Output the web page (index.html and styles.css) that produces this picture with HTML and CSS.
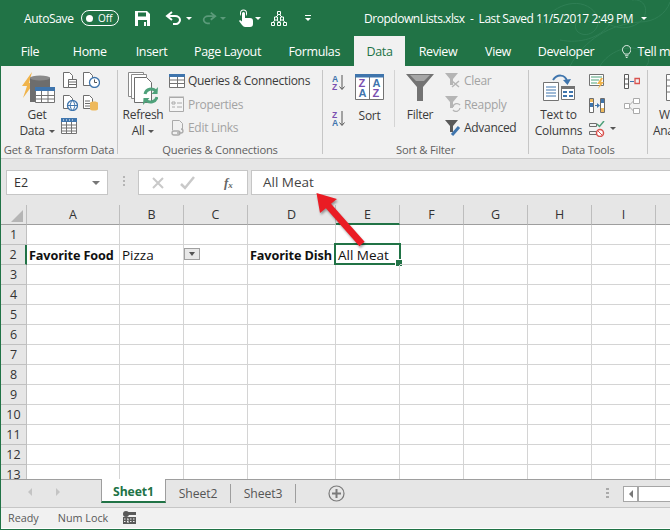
FILE: index.html
```html
<!DOCTYPE html>
<html lang="en">
<head>
<meta charset="utf-8">
<title>DropdownLists.xlsx</title>
<link rel="stylesheet" href="styles.css">
</head>
<body>
<div class="window">
  <div class="head">
    <svg class="filigree" width="130" height="66" viewBox="0 0 130 66" fill="none" stroke="#2f7f55" stroke-width="1">
      <path d="M2 24C14 2 44-4 56 14c8 14-8 26-18 18-8-8 4-18 12-10"/>
      <path d="M30 66C44 40 70 24 100 22c14 0 26-8 30-20"/>
      <path d="M56 14c14 16 34 18 46 6 8-10 2-22-10-20"/>
      <path d="M60 66c8-14 30-24 44-14 10 8 2 20-8 14"/>
      <path d="M20 40c20 4 40-2 50-16"/>
    </svg>
    <header class="titlebar">
      <span class="autosave">AutoSave</span>
      <span class="toggle"><i class="knob"></i><span>Off</span></span>
      <svg class="qa save" width="15" height="15" viewBox="0 0 15 15"><path fill="#fff" d="M0 0h12l3 3v12H0z"/><path fill="#217346" d="M3 1.500h8v4H3zM3 9h9v6H3z"/><path fill="#fff" d="M9 11h2v4H9z"/></svg>
      <svg class="qa undo" width="18" height="14" viewBox="0 0 18 14" fill="none" stroke="#fff" stroke-width="2"><path d="M7 1 2 5l5 4"/><path d="M2 5h8c3 0 5 2 5 4s-2 4-4 4H8"/></svg>
      <span class="caret c-undo"></span>
      <svg class="qa redo" width="16" height="14" viewBox="0 0 18 14" fill="none" stroke="#5b9a7a" stroke-width="2"><path d="m11 1 5 4-5 4"/><path d="M16 5H8C5 5 3 7 3 9s2 4 4 4h3"/></svg>
      <span class="caret dim c-redo"></span>
      <svg class="qa touch" width="17" height="18" viewBox="0 0 17 18"><path fill="#fff" d="M3 5V4a3.500 3.500 0 0 1 7 0v1a3.500 3.500 0 0 1-1 2V4a2.500 2.500 0 0 0-5 0v3a3.500 3.500 0 0 1-1-2z"/><path fill="#fff" d="M5 4.500a1.500 1.500 0 0 1 3 0V9h5c2 0 3 1 3 3v3c0 2-1 3-3 3H8c-1 0-2-1-3-2L2 12l1-1 2 1.500z"/></svg>
      <span class="caret c-touch"></span>
      <svg class="qa tree" width="16" height="15" viewBox="0 0 16 15" fill="none" stroke="#fff"><path d="M6.500.500h3v3h-3zM3.500 6h3v3h-3zM9.500 6h3v3h-3zM.500 11.500h3v3h-3zM6.500 11.500h3v3h-3zM12.500 11.500h3v3h-3z"/><path d="M7 4 5 6M9 4l2 2M4 9l-2 2.500M6 9l2 2.500M10 9l-2 2.500M12 9l2 2.500"/></svg>
      <span class="customize"></span>
      <span class="doc-title">DropdownLists.xlsx &nbsp;-&nbsp; Last Saved 11/5/2017 2:49 PM</span>
      <span class="caret c-title"></span>
    </header>
    <nav class="tabs">
      <span>File</span><span>Home</span><span>Insert</span><span>Page Layout</span><span>Formulas</span><span class="active">Data</span><span>Review</span><span>View</span><span>Developer</span>
      <span class="tell">
        <svg width="11" height="15" viewBox="0 0 11 15" fill="none" stroke="#fff"><path d="M3 10.500C2 8.500.500 7.500.500 5.500a5 5 0 0 1 10 0c0 2-1.500 3-2.500 5zM3.500 12.500h4M4.500 14.500h2"/></svg>
        Tell me
      </span>
    </nav>
  </div>

  <section class="ribbon">
    <div class="group g1">
      <div class="body">
        <div class="big getdata">
          <svg width="34" height="34" viewBox="0 0 34 34">
            <path fill="#f0b44c" d="M11 0 1 14h5L2 26l11-15H8z"/>
            <path fill="#6d6d6d" d="M9 6c0-2 20-2 20 0v24H9z"/>
            <ellipse cx="19" cy="6" rx="10" ry="2.500" fill="#8a8a8a"/>
            <path fill="#fff" stroke="#737373" d="M14.500 16.500h19v14h-19z"/>
            <path fill="#3f75ad" d="M14 15h20v4H14z"/>
            <path fill="none" stroke="#737373" d="M14.500 23.500h19M14.500 27h19M20.500 19v11M27 19v11"/>
          </svg>
          <span class="l1">Get</span><span class="l2">Data<i class="drop"></i></span>
        </div>
        <div class="minis">
          <svg width="14" height="16" viewBox="0 0 14 16" fill="#fff" stroke="#6d6d6d"><path d="M.500.500h6l3 3v12h-9z"/><path d="M5.500 7.500h8v8h-8zM5.500 10h8M5.500 12.500h8"/></svg>
          <svg width="17" height="16" viewBox="0 0 17 16"><path fill="#fff" stroke="#6d6d6d" d="M.500.500h6l3 3v10h-9z"/><circle cx="11.500" cy="10.500" r="5" fill="#fff" stroke="#3f75ad" stroke-width="1.300"/><path fill="none" stroke="#555" d="M11.500 7.500v3h2.500"/></svg>
          <svg width="15" height="16" viewBox="0 0 15 16"><path fill="#fff" stroke="#6d6d6d" d="M.500.500h6l3 3v10h-9z"/><circle cx="9.500" cy="10.500" r="5" fill="#fff" stroke="#3f75ad" stroke-width="1.300"/><path fill="none" stroke="#3f75ad" d="M4.500 10.500h10M9.500 5.500c-3 3-3 7 0 10M9.500 5.500c3 3 3 7 0 10"/></svg>
          <svg width="15" height="16" viewBox="0 0 15 16"><path fill="#fff" stroke="#6d6d6d" d="M.500.500h6l3 3v10h-9zM2 6h5M2 8.500h5M2 11h5"/><path fill="#eeb95c" d="M7 8c0-2 8-2 8 0v6c0 2-8 2-8 0z"/></svg>
          <svg class="wide" width="16" height="16" viewBox="0 0 16 16"><path fill="#fff" stroke="#737373" d="M.500.500h15v15H.500z"/><path fill="#3f75ad" d="M0 0h16v4H0z"/><path stroke="#737373" d="M.500 7h15M.500 10h15M.500 13h15M5.500 4v12M10.500 4v12"/><path stroke="#fff" stroke-dasharray="1 2" d="M2 2h12"/></svg>
        </div>
      </div>
      <div class="label">Get &amp; Transform Data</div>
    </div>

    <div class="group g2">
      <div class="body">
        <div class="big refresh">
          <svg width="30" height="34" viewBox="0 0 30 34">
            <path fill="#fff" stroke="#8a8a8a" d="M.500.500h15v24h-15z"/>
            <path fill="#fff" stroke="#8a8a8a" d="M3.500 2.500h15v24h-15z"/>
            <path fill="#fff" stroke="#6d6d6d" d="M6.500 5.500h12l5 5v20h-17z"/>
            <path fill="none" stroke="#4ea17a" stroke-width="3" d="M17 22a6.500 6.500 0 0 1 11-3M29 25a6.500 6.500 0 0 1-11 3"/>
            <path fill="#4ea17a" d="m30 15-.5 7h-6zM15 33l.5-7h6z"/>
          </svg>
          <span class="l1">Refresh</span><span class="l2">All<i class="drop"></i></span>
        </div>
        <ul class="list">
          <li><svg width="16" height="14" viewBox="0 0 16 14"><path fill="#fff" stroke="#737373" d="M.500.500h15v13H.500z"/><path fill="#3f75ad" d="M0 0h16v3H0z"/><path stroke="#737373" d="M.500 6h15M.500 9.500h15M8.500 3v11"/></svg>Queries &amp; Connections</li>
          <li class="off"><svg width="16" height="16" viewBox="0 0 16 16" fill="none" stroke="#aaa"><path fill="#f5f5f5" d="M.500 1.500h14v14h-14z"/><path d="M3 6h3v2H3zM8 7h5M3 11h3M8 11h5M0 1h15"/></svg>Properties</li>
          <li class="off"><svg width="16" height="16" viewBox="0 0 16 16" fill="none" stroke="#aaa"><path d="M3.500.500h7l3 3v7M3.500.500v10"/><path stroke-width="1.300" d="M5 11h4a2 2 0 0 1 0 4H5a2 2 0 0 1 0-4zM8 13h4a2 2 0 0 0 0-4"/></svg>Edit Links</li>
        </ul>
      </div>
      <div class="label">Queries &amp; Connections</div>
    </div>

    <div class="group g3">
      <div class="body">
        <div class="sorts">
          <svg width="14" height="17" viewBox="0 0 14 17"><text x="0" y="7.500" class="az blue">A</text><text x="0" y="16" class="az purple">Z</text><path fill="none" stroke="#555" d="M10 1v14M7.500 12.500 10 15.500l2.500-3"/></svg>
          <svg width="14" height="17" viewBox="0 0 14 17"><text x="0" y="7.500" class="az purple">Z</text><text x="0" y="16" class="az blue">A</text><path fill="none" stroke="#555" d="M10 1v14M7.500 12.500 10 15.500l2.500-3"/></svg>
        </div>
        <div class="big sort">
          <svg width="29" height="26" viewBox="0 0 29 26">
            <path fill="#fff" stroke="#737373" d="M.500.500h28v25H.500zM14.500 3v23"/>
            <path fill="#3f75ad" d="M0 0h29v3.500H0z"/>
            <text x="3.500" y="13" class="sortl purple">Z</text><text x="3.500" y="23" class="sortl blue">A</text>
            <text x="17.500" y="13" class="sortl blue">A</text><text x="17.500" y="23" class="sortl purple">Z</text>
          </svg>
          <span class="l1">Sort</span>
        </div>
        <div class="big filter">
          <svg width="28" height="27" viewBox="0 0 28 27"><path fill="#737373" d="M0 0h28L17 13v14h-6V13z"/><path fill="#a6a6a6" d="M4 1h20l-6 6h-8z"/></svg>
          <span class="l1">Filter</span>
        </div>
        <ul class="list">
          <li class="off"><svg width="16" height="15" viewBox="0 0 16 15"><path fill="#b5b5b5" d="M0 0h13L8 6v6H5V6z"/><path stroke="#b5b5b5" stroke-width="1.500" d="m7 8 7 6M14 8l-7 6"/></svg>Clear</li>
          <li class="off"><svg width="16" height="16" viewBox="0 0 16 16"><path fill="#b5b5b5" d="M0 0h13L8 6v6H5V6z"/><path fill="none" stroke="#b5b5b5" stroke-width="1.300" d="M8 11a4 4 0 0 1 7-2M15 12a4 4 0 0 1-7 2"/></svg>Reapply</li>
          <li><svg width="16" height="16" viewBox="0 0 16 16"><path fill="#595959" d="M0 0h13L8 6v6H5V6z"/><path stroke="#3f75ad" stroke-width="3" d="M7 15l7-8"/></svg>Advanced</li>
        </ul>
      </div>
      <div class="label">Sort &amp; Filter</div>
    </div>

    <div class="group g4">
      <div class="body">
        <div class="big columns">
          <svg width="32" height="27" viewBox="0 0 32 27">
            <path fill="none" stroke="#3f75ad" stroke-width="2" d="M10 6C14 0 22 0 24 7"/><path fill="#3f75ad" d="m20 6 4.500 5L28 5z"/>
            <path fill="#fff" stroke="#737373" d="M.500 8.500h15v18H.500z"/><path stroke="#3f75ad" d="M3 13h10M3 16h10M3 19h10M3 22h10"/>
            <path fill="#fff" stroke="#737373" d="M18.500 12.500h13v13h-13z"/><path fill="#737373" d="M18 12h14v3H18z"/><path stroke="#3f75ad" stroke-width="2" d="M20 18h4M26 18h4M20 22h4M26 22h4"/>
          </svg>
          <span class="l1">Text to</span><span class="l2">Columns</span>
        </div>
        <div class="tools">
          <svg width="16" height="15" viewBox="0 0 16 15"><path fill="#fff" stroke="#737373" d="M.500.500h14v11H.500z"/><path stroke="#4ea17a" d="M2 3h11M2 6h8M2 9h6"/><path fill="#f0b44c" d="m12 4-4 6h3l-2 5 6-7h-3l2-4z"/></svg>
          <svg width="16" height="15" viewBox="0 0 16 15"><path fill="#fff" stroke="#6d6d6d" d="M.500.500h4v14h-4zM11.500.500h4v14h-4z"/><path fill="#3f75ad" d="M1 5h3v4H1z"/><path fill="#eeb95c" d="M1 1h3v3H1zM12 10h3v4h-3z"/><path fill="#3f75ad" d="M12 1h3v4h-3z"/><path stroke="#3f75ad" d="M6 7.500h3"/><path fill="#3f75ad" d="m8 5 3 2.500L8 10z"/></svg>
          <span class="tool-drop"><svg width="16" height="16" viewBox="0 0 16 16" fill="none"><path stroke="#4ea17a" stroke-width="1.500" d="m8 3 2.500 2.500L15 0"/><path stroke="#6d6d6d" d="M.500 2.500h7v3h-7zM.500 10.500h7v3h-7z"/><circle cx="11" cy="12" r="3.500" fill="#fff" stroke="#d9534f" stroke-width="1.500"/><path stroke="#d9534f" d="m9 10 4 4"/></svg><i class="drop"></i></span>
        </div>
        <div class="tools t2">
          <svg width="16" height="15" viewBox="0 0 16 15"><path fill="#fff" stroke="#595959" d="M.500.500h4v14h-4zM.500 5h4M.500 10h4"/><path stroke="#3f75ad" d="M6 7.500h4"/><path fill="none" stroke="#d9534f" stroke-width="1.300" d="M11 4.500h4.500v5H11z"/></svg>
          <svg width="16" height="16" viewBox="0 0 16 16" fill="#fff" stroke="#aaa"><path d="M.500 5.500h5v5h-5zM9.500.500h6v5h-6zM9.500 10.500h6v5h-6zM5.500 7 9.500 3M5.500 9l4 4"/></svg>
        </div>
      </div>
      <div class="label">Data Tools</div>
    </div>

    <div class="group g5">
      <div class="body">
        <div class="big whatif">
          <svg width="24" height="27" viewBox="0 0 24 27"><path fill="#fff" stroke="#737373" d="M8.500.500h15v26h-15z"/><path stroke="#737373" d="M8.500 6h15M8.500 12h15M8.500 18h15"/></svg>
          <span class="l1">What-If</span><span class="l2">Analysis</span>
        </div>
      </div>
    </div>
  </section>

  <div class="formula-row">
    <div class="namebox"><span>E2</span><i class="nb-caret"></i></div>
    <div class="dots"></div>
    <div class="fxbox">
      <svg width="14" height="14" viewBox="0 0 14 14" stroke="#c9c9c9" stroke-width="2"><path d="m2 2 10 10M12 2 2 12"/></svg>
      <svg width="15" height="14" viewBox="0 0 15 14" fill="none" stroke="#c9c9c9" stroke-width="2.500"><path d="m1 8 4 4 9-11"/></svg>
      <span class="fx">f<sub>x</sub></span>
    </div>
    <div class="formula">All Meat</div>
  </div>

  <div class="sheet">
    <table class="grid">
      <colgroup><col class="c-rh"><col class="c-a"><col class="c-n"><col class="c-n"><col class="c-d"><col class="c-n"><col class="c-n"><col class="c-n"><col class="c-n"><col class="c-n"><col class="c-n"></colgroup>
      <thead>
        <tr><th class="corner"><i class="tri"></i></th><th>A</th><th>B</th><th>C</th><th>D</th><th class="cur">E</th><th>F</th><th>G</th><th>H</th><th>I</th><th></th></tr>
      </thead>
      <tbody>
        <tr><th>1</th><td></td><td></td><td></td><td></td><td></td><td></td><td></td><td></td><td></td><td></td></tr>
        <tr><th class="cur">2</th><td class="b">Favorite Food</td><td>Pizza</td><td><span class="dd"></span></td><td class="b">Favorite Dish</td><td class="selected">All Meat<i class="sel"></i></td><td></td><td></td><td></td><td></td><td></td></tr>
        <tr><th>3</th><td></td><td></td><td></td><td></td><td></td><td></td><td></td><td></td><td></td><td></td></tr>
        <tr><th>4</th><td></td><td></td><td></td><td></td><td></td><td></td><td></td><td></td><td></td><td></td></tr>
        <tr><th>5</th><td></td><td></td><td></td><td></td><td></td><td></td><td></td><td></td><td></td><td></td></tr>
        <tr><th>6</th><td></td><td></td><td></td><td></td><td></td><td></td><td></td><td></td><td></td><td></td></tr>
        <tr><th>7</th><td></td><td></td><td></td><td></td><td></td><td></td><td></td><td></td><td></td><td></td></tr>
        <tr><th>8</th><td></td><td></td><td></td><td></td><td></td><td></td><td></td><td></td><td></td><td></td></tr>
        <tr><th>9</th><td></td><td></td><td></td><td></td><td></td><td></td><td></td><td></td><td></td><td></td></tr>
        <tr><th>10</th><td></td><td></td><td></td><td></td><td></td><td></td><td></td><td></td><td></td><td></td></tr>
        <tr><th>11</th><td></td><td></td><td></td><td></td><td></td><td></td><td></td><td></td><td></td><td></td></tr>
        <tr><th>12</th><td></td><td></td><td></td><td></td><td></td><td></td><td></td><td></td><td></td><td></td></tr>
        <tr><th>13</th><td></td><td></td><td></td><td></td><td></td><td></td><td></td><td></td><td></td><td></td></tr>
      </tbody>
    </table>
  </div>

  <div class="sheetbar">
    <div class="navs"><i class="nav-l"></i><i class="nav-r"></i></div>
    <span class="stab on">Sheet1</span>
    <span class="stab">Sheet2</span>
    <span class="stab">Sheet3</span>
    <svg class="plus" width="17" height="17" viewBox="0 0 17 17" fill="none" stroke="#7a7a7a"><circle cx="8.500" cy="8.500" r="7.500" stroke-width="1.200"/><path stroke-width="2" d="M8.500 4v9M4 8.500h9"/></svg>
    <div class="vdots"></div>
    <div class="hscroll"><span class="hs-btn"><i class="nav-l dark"></i></span><span class="hs-thumb"></span></div>
  </div>

  <footer class="status">
    <span>Ready</span><span>Num Lock</span>
    <svg width="13" height="13" viewBox="0 0 13 13"><circle cx="3" cy="3" r="3" fill="#595959"/><path fill="#595959" d="M5 1h8v3H5zM0 6h13v7H0z"/><path stroke="#f1f1f1" stroke-dasharray="1.500 1.500" d="M1 8h11M1 10.500h11M5 8v4"/></svg>
  </footer>

  <svg class="arrow" width="70" height="70" viewBox="310 186 70 70"><polygon fill="#ea1c24" points="316.500,193 337,199 331,203.700 364.600,241.700 359.400,246.300 325.900,208.300 320,213"/></svg>
</div>
</body>
</html>
```

FILE: styles.css
```css
* { box-sizing: border-box; }
html, body { margin: 0; padding: 0; }
body { font-family: "Open Sans", "Noto Sans", "Liberation Sans", sans-serif; color: #262626; }
.window { position: relative; width: 670px; height: 530px; overflow: hidden; border-left: 1px solid #217346; border-bottom: 1px solid #217346; background: #fff; display: flex; flex-direction: column; }

.head { position: relative; background: #217346; height: 66px; margin-left: -1px; flex: none; }
.filigree { position: absolute; right: 0; top: 0; }
.titlebar { position: relative; height: 36px; display: flex; align-items: center; color: #fff; font-size: 12px; }
.autosave { margin-left: 24px; width: 57px; letter-spacing: -.35px; }
.toggle { width: 38px; height: 16px; border: 1px solid #fff; border-radius: 8px; display: flex; align-items: center; padding-left: 4px; font-size: 10px; gap: 5px; }
.knob { width: 7px; height: 7px; border-radius: 50%; background: #fff; }
.qa { flex: none; }
.save { margin-left: 16px; }
.undo { margin-left: 15px; }
.redo { margin-left: 9px; }
.touch { margin-left: 11px; }
.tree { margin-left: 10px; }
.caret { width: 0; height: 0; border-left: 3px solid transparent; border-right: 3px solid transparent; border-top: 3px solid #fff; flex: none; }
.caret.dim { border-top-color: #5b9a7a; }
.c-undo { margin-left: 3px; }
.c-redo { margin-left: 3px; }
.c-touch { margin-left: 1px; }
.customize { margin-left: 18px; width: 6px; height: 6px; border-top: 1px solid #fff; position: relative; flex: none; }
.customize::after { content: ""; position: absolute; left: 0; top: 2px; border-left: 3px solid transparent; border-right: 3px solid transparent; border-top: 3px solid #fff; }
.doc-title { margin-left: 53px; width: 274px; white-space: nowrap; letter-spacing: -.46px; font-size: 12px; }
.c-title { margin-left: 3px; }

.tabs { position: relative; height: 30px; padding-left: 3px; display: grid; grid-template-columns: 54px 65.500px 58px 94px 79.500px 51px 66px 54px 82px 70px; color: #fff; font-size: 12.500px; letter-spacing: -.35px; }
.tabs span { display: flex; align-items: center; justify-content: center; white-space: nowrap; padding-top: 1px; }
.tabs .active { background: #f1f1f1; color: #217346; }
.tabs .tell { justify-content: flex-start; padding-left: 15px; gap: 6px; }

.ribbon { height: 93px; flex: none; background: #f1f1f1; border-bottom: 1px solid #c9c9c9; display: flex; font-size: 12px; letter-spacing: -.3px; color: #3b3b3b; }
.group { display: flex; flex-direction: column; height: 84px; margin-top: 4px; border-right: 1px solid #c6c6c6; flex: none; position: relative; }
.body { flex: 1; display: flex; min-height: 0; }
.label { height: 16px; margin-bottom: -4px; text-align: center; color: #5f5f5f; font-size: 11.200px; line-height: 16px; white-space: nowrap; letter-spacing: -.2px; }
.g1 { width: 117px; }
.g2 { width: 205px; }
.g3 { width: 206px; }
.g4 { width: 119px; }
.g5 { width: 22px; border: 0; }
.big { display: flex; flex-direction: column; align-items: center; position: relative; white-space: nowrap; }
.big svg { flex: none; }
.l1, .l2 { line-height: 16px; }
.drop { display: inline-block; margin-left: 4px; vertical-align: middle; border-left: 3px solid transparent; border-right: 3px solid transparent; border-top: 3px solid #555; }
.getdata { width: 60px; padding: 2px 0 0 12px; }
.getdata svg { margin: 0 0 1px 2px; }
.minis { display: grid; grid-template-columns: 20px 20px; grid-auto-rows: 23px; padding: 2px 0 0 2px; }
.minis .wide { margin-left: -2px; }

.refresh { width: 50px; padding-top: 2px; }
.refresh svg { margin-bottom: 1px; }
.list { list-style: none; margin: -1px 0 0 1px; padding: 0; display: grid; grid-auto-rows: 23.500px; }
.list li { display: flex; align-items: center; gap: 3px; white-space: nowrap; height: 23.500px; }
.list li svg { flex: none; }
.list .off { color: #a3a3a3; }

.sorts { width: 31px; padding: 4px 0 0 9px; display: flex; flex-direction: column; gap: 19px; }
.az { font: 700 8.500px "Liberation Sans", sans-serif; letter-spacing: 0; }
.blue { fill: #3f75ad; }
.purple { fill: #7a4fb0; }
.sort { width: 31px; padding-top: 4px; }
.sort svg { margin-bottom: 8px; }
.sortl { font: 700 11px "Liberation Sans", sans-serif; letter-spacing: 0; }
.filter { width: 51px; margin-left: 9px; padding-top: 4px; border-left: 1px solid #d4d4d4; height: 57px; }
.filter svg { margin-bottom: 6px; }
.g3 .list { margin-left: 0; }
.columns { width: 61px; padding-top: 4px; margin-left: -1px; }
.columns svg { margin-bottom: 6px; }
.tools { display: grid; grid-auto-rows: 23.500px; padding-top: 4px; width: 35px; }
.t2 { width: 20px; }
.tool-drop { display: flex; align-items: flex-start; }
.tool-drop .drop { margin: 6px 0 0 5px; }
.whatif { width: 22px; padding-top: 4px; align-items: flex-start; }
.whatif svg { margin: 0 0 6px 10px; }
.whatif .l1 { margin-left: 11px; }
.whatif .l2 { margin-left: 5px; }
.g5, .whatif { overflow: hidden; }

.formula-row { height: 46px; flex: none; background: #e6e6e6; display: flex; align-items: flex-start; padding: 11px 0 0 5px; font-size: 12.500px; }
.formula-row > div { height: 25px; background: #fff; border: 1px solid #c6c6c6; }
.namebox { width: 102px; display: flex; align-items: center; justify-content: space-between; padding: 0 7px; color: #333; }
.nb-caret { border-left: 4px solid transparent; border-right: 4px solid transparent; border-top: 4px solid #777; }
.formula-row > .dots { width: 2px; height: 12px; margin: 6px 13px 0 15px; border: 0; background: repeating-linear-gradient(#b5b5b5 0 2px, transparent 2px 4px); }
.fxbox { width: 110px; display: flex; align-items: center; padding-left: 12px; gap: 15px; }
.fx { font: italic 700 13px "Liberation Serif", serif; color: #666; margin-left: 14px; }
.fx sub { font-size: 9px; vertical-align: -1px; }
.formula { flex: 1; margin-left: 3px; border-right: 0 !important; padding-left: 11px; line-height: 23px; color: #444; font-size: 13.500px; }

.sheet { height: 274px; flex: none; overflow: hidden; }
.grid { border-collapse: separate; border-spacing: 0; table-layout: fixed; width: 695px; font-size: 13.500px; }
.c-rh { width: 26px; }
.c-a { width: 93px; }
.c-n { width: 64px; }
.c-d { width: 88px; }
.grid th { background: #e6e6e6; font-weight: 400; text-align: center; height: 20px; padding: 0; border-right: 1px solid #c0c0c0; border-bottom: 1px solid #c0c0c0; color: #333; font-size: 12.500px; }
.grid thead th { border-right-color: #bdbdbd; border-bottom-color: #9e9e9e; }
.grid thead .cur { border-bottom: 2px solid #217346; }
.grid tbody .cur { border-right: 2px solid #217346; }
.grid td { height: 20px; padding: 0 0 0 2px; border-right: 1px solid #d4d4d4; border-bottom: 1px solid #d4d4d4; white-space: nowrap; overflow: visible; color: #111; position: relative; }
.grid .b { font-weight: 700; font-size: 12.700px; letter-spacing: -.13px; }
.corner { position: relative; }
.tri { position: absolute; right: 3px; bottom: 2px; border-left: 12px solid transparent; border-bottom: 12px solid #b5b5b5; }
.dd { display: block; width: 16px; height: 12px; margin: -1px 0 0 -2px; background: #e8e8e8; border: 1px solid #a0a0a0; position: relative; }
.dd::after { content: ""; position: absolute; left: 4px; top: 3px; border-left: 3px solid transparent; border-right: 3px solid transparent; border-top: 4px solid #555; }
.sel { position: absolute; left: -2px; top: -2px; width: 67px; height: 22px; border: 2px solid #217346; }
.sel::after { content: ""; position: absolute; right: -4px; bottom: -4px; width: 6px; height: 6px; background: #217346; border: 1px solid #fff; }

.sheetbar { height: 28px; flex: none; background: #e6e6e6; border-top: 1px solid #9e9e9e; display: flex; align-items: flex-start; font-size: 12.200px; color: #555; letter-spacing: -.1px; }
.navs { width: 100px; height: 24px; display: flex; align-items: center; padding-left: 27px; gap: 24px; }
.nav-l { border-top: 4px solid transparent; border-bottom: 4px solid transparent; border-right: 4px solid #c4c4c4; }
.nav-r { border-top: 4px solid transparent; border-bottom: 4px solid transparent; border-left: 4px solid #c4c4c4; }
.nav-l.dark { border-right-color: #777; }
.stab { width: 65px; display: flex; align-items: center; justify-content: center; border-right: 1px solid #9e9e9e; margin-top: 4px; height: 19px; }
.stab.on { margin-top: -1px; height: 24px; padding-top: 3px; background: #fff; color: #217346; font-weight: 700; border: 1px solid #9e9e9e; border-top: 0; border-bottom: 2px solid #217346; }
.plus { margin: 5px 0 0 32px; flex: none; }
.vdots { width: 3px; height: 11px; margin: 8px 0 0 261px; background: repeating-linear-gradient(#aaa 0 2px, transparent 2px 4px); flex: none; }
.hscroll { margin: 6px 0 0 14px; height: 16px; flex: 1; display: flex; border: 1px solid #a6a6a6; border-right: 0; background: #fff; }
.hs-btn { width: 15px; display: flex; align-items: center; justify-content: center; border-right: 2px solid #a6a6a6; }
.status { height: 21px; flex: none; background: #f1f1f1; border-top: 1px solid #c6c6c6; display: flex; align-items: center; padding: 0 0 1px 7px; gap: 19px; font-size: 10.800px; color: #595959; }
.status svg { margin-left: -4px; }

.arrow { position: absolute; left: 309px; top: 186px; filter: drop-shadow(1px 2px 1px rgba(0,0,0,.35)); overflow: visible; }
```
